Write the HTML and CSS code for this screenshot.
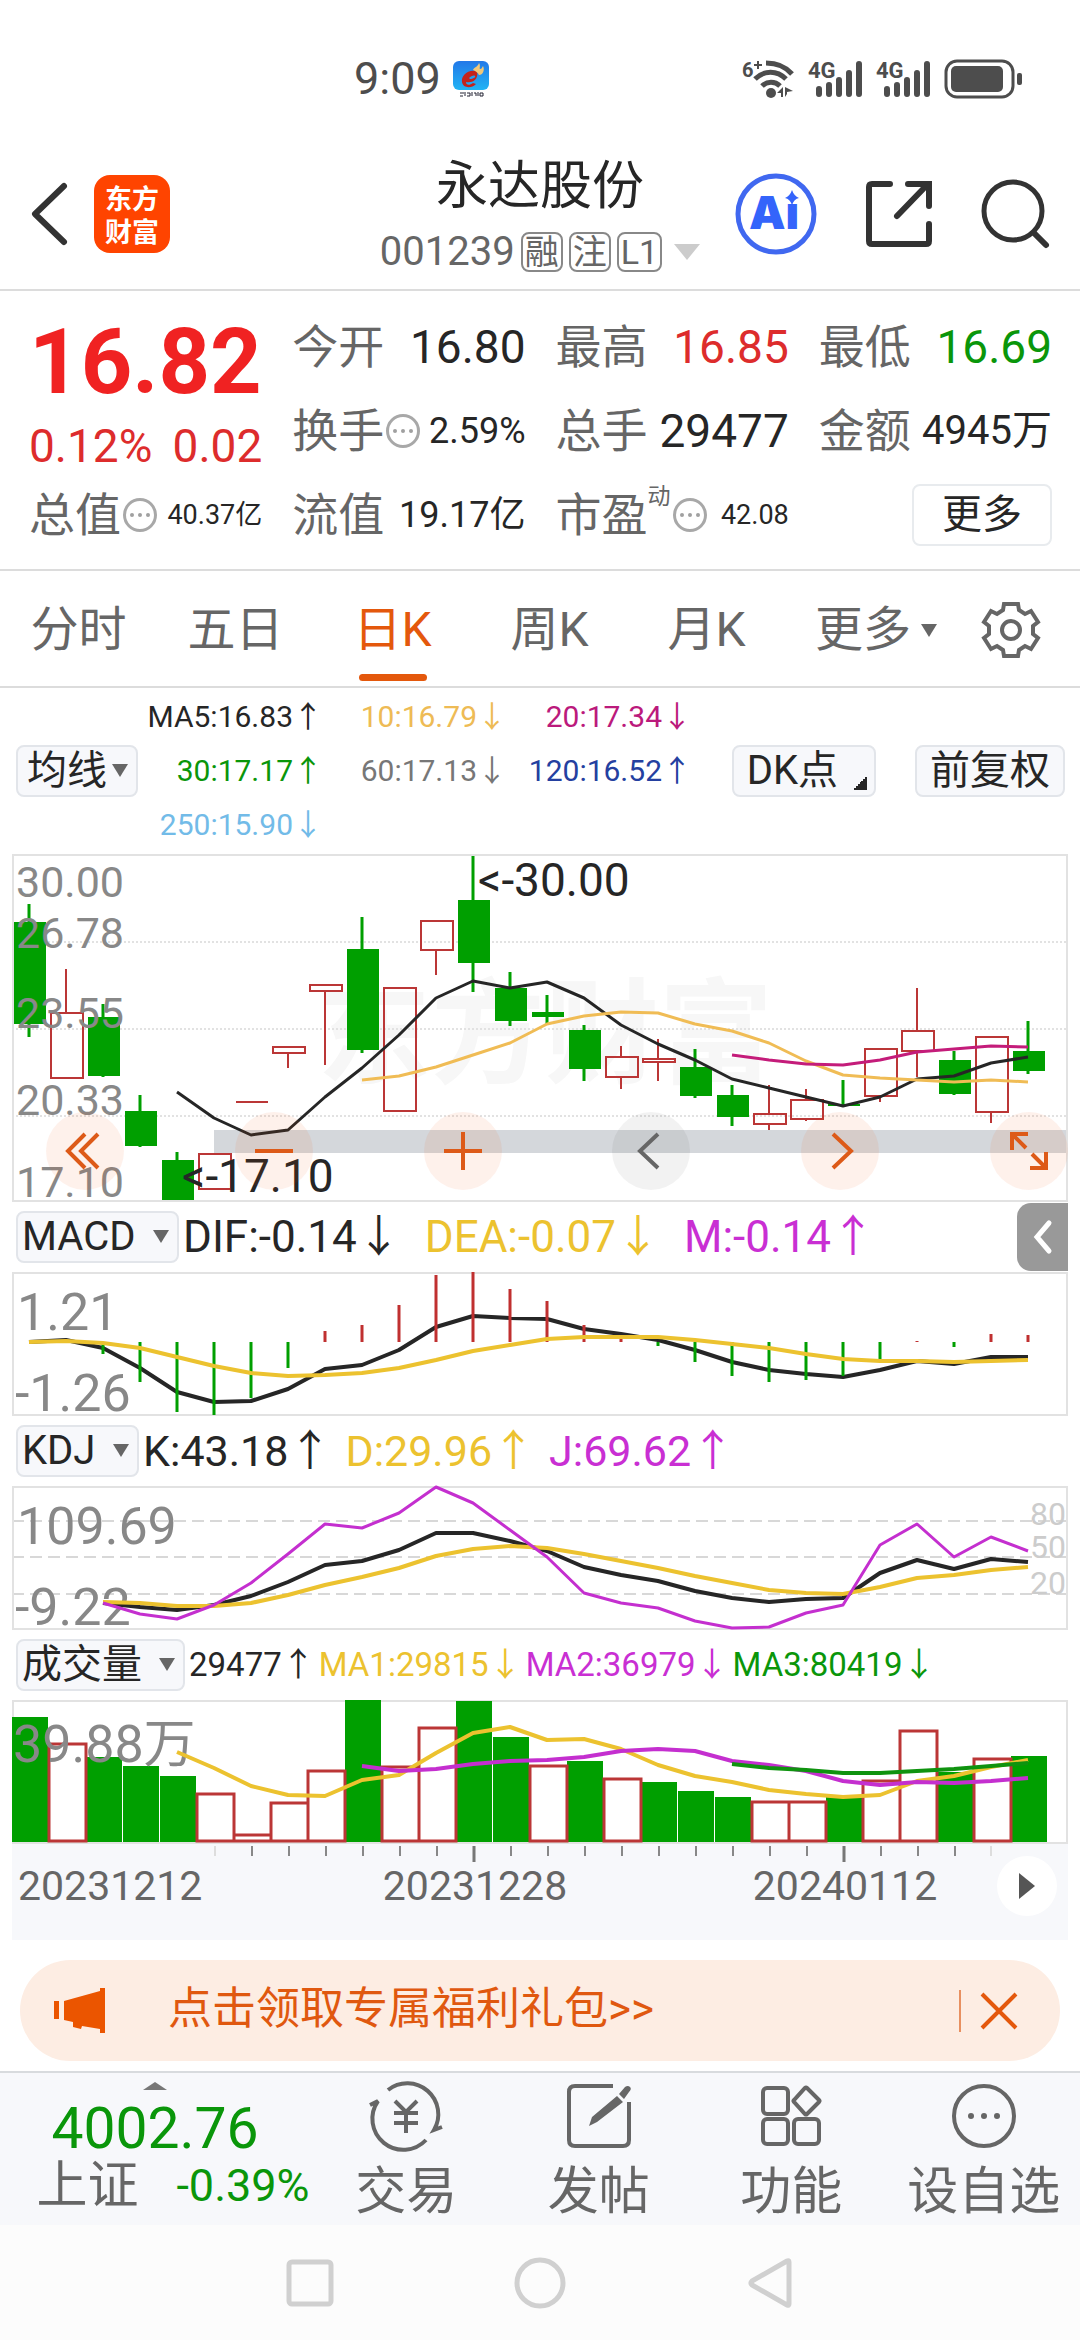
FILE: index.html
```html
<!DOCTYPE html>
<html lang="zh-CN">
<head>
<meta charset="utf-8">
<meta name="viewport" content="width=device-width, initial-scale=1">
<title>永达股份 001239</title>
<link rel="stylesheet" href="styles.css">
</head>
<body>
<div class="status">
  <div class="status-left">
    <span class="clock">9:09</span>
    <svg width="36" height="36" viewBox="0 0 36 36" aria-hidden="true">
      <defs><linearGradient id="sky" x1="0" y1="0" x2="0" y2="1"><stop offset="0" stop-color="#2278e8"/><stop offset="1" stop-color="#22b4f4"/></linearGradient></defs>
      <rect width="36" height="29" rx="6" fill="url(#sky)"/>
      <path d="M24 10C14 8 8 15 9 21c1 6 9 7 14 2l-3-1c-4 3-7 2-7-1 5 1 13-1 11-11z" fill="#c2231c"/>
      <path d="M16 17c2-2 5-3 6-2s-2 3-5 3z" fill="#22a0f0"/>
      <path d="M20 9c1-3 5-3 6-7 2 3 0 5 1 6 2 0 2-2 3-3 2 4 0 9-4 9-1-2-3-4-6-5z" fill="#f2c879"/>
      <path d="M7 32h4M7 35h3M12 31v4M14 32h3v3h-3M19 31v4M21 32h2v3M25 31v4M27 32h3v3h-3z" fill="none" stroke="#223" stroke-width="1"/>
    </svg>
  </div>
  <div class="status-right">
    <svg width="54" height="40" viewBox="0 0 54 40" aria-hidden="true">
      <text x="0" y="18" class="tiny">6</text>
      <path d="M12 6h8M16 2v8" stroke="#4d4d4d" stroke-width="2"/>
      <g fill="none" stroke="#4d4d4d" stroke-width="5"><path d="M24 4c11 0 20 4 26 11"/><path d="M13 20c9-9 22-9 31 0"/><path d="M20 27c5-5 13-5 18 0"/></g>
      <circle cx="29" cy="34" r="5" fill="#4d4d4d"/><path d="M35 34l6-6v10h-2v-4zM43 28v10l2-3v-2l6-1z" fill="#4d4d4d"/>
    </svg>
    <svg width="56" height="40" viewBox="0 0 56 40" aria-hidden="true">
      <text x="0" y="19" class="net">4G</text>
      <path d="M11 30v5M21 26v9M31 21v14M41 14v21M51 5v30" stroke="#4d4d4d" stroke-width="6" stroke-linecap="round"/>
    </svg>
    <svg width="56" height="40" viewBox="0 0 56 40" aria-hidden="true">
      <text x="0" y="19" class="net">4G</text>
      <path d="M11 30v5M21 26v9M31 21v14M41 14v21M51 5v30" stroke="#4d4d4d" stroke-width="6" stroke-linecap="round"/>
    </svg>
    <svg width="78" height="40" viewBox="0 0 78 40" aria-hidden="true">
      <rect x="2" y="2" width="67" height="36" rx="11" fill="none" stroke="#4d4d4d" stroke-width="3"/>
      <rect x="7" y="7" width="52" height="26" rx="5" fill="#4d4d4d"/>
      <rect x="73" y="14" width="5" height="12" rx="2" fill="#4d4d4d"/>
    </svg>
  </div>
</div>

<header class="header">
  <div class="head-left">
    <button class="icon" aria-label="返回"><svg width="36" height="62" viewBox="0 0 36 62"><path d="M33 3L4 31l29 28" fill="none" stroke="#333" stroke-width="6" stroke-linecap="round" stroke-linejoin="round"/></svg></button>
    <a class="logo" href="#home">东方<br>财富</a>
  </div>
  <div class="head-title">
    <h1>永达股份</h1>
    <div class="code"><span>001239</span><i class="mark">融</i><i class="mark">注</i><i class="mark">L1</i><i class="tri tri-head"></i></div>
  </div>
  <div class="head-right">
    <button class="icon" aria-label="AI"><svg width="82" height="82" viewBox="0 0 82 82"><circle cx="41" cy="41" r="38" fill="none" stroke="#4068f0" stroke-width="5"/><text x="14" y="56" class="ai">Ai</text><path d="M48 16h17v14H48z" fill="#fff"/><path d="M57 17q2 6 7 8-5 1-7 7-2-6-7-7 5-2 7-8z" fill="#3464fb"/></svg></button>
    <button class="icon" aria-label="分享"><svg width="66" height="66" viewBox="0 0 66 66"><path d="M24 3H6q-3 0-3 3v54q0 3 3 3h54q3 0 3-3V43M31 35L60 5M42 3h21v22" fill="none" stroke="#333" stroke-width="6" stroke-linecap="round"/></svg></button>
    <button class="icon" aria-label="搜索"><svg width="68" height="68" viewBox="0 0 68 68"><circle cx="32" cy="31" r="29" fill="none" stroke="#333" stroke-width="5"/><path d="M53 53l12 12" stroke="#333" stroke-width="6" stroke-linecap="round"/></svg></button>
  </div>
</header>

<section class="quote">
  <div class="price up">
    <strong>16.82</strong>
    <div class="change"><span>0.12%</span><span>0.02</span></div>
  </div>
  <div class="cell"><span class="name">今开</span><span class="v46">16.80</span></div>
  <div class="cell"><span class="name">最高</span><span class="v46 up">16.85</span></div>
  <div class="cell"><span class="name">最低</span><span class="v46 down">16.69</span></div>
  <div class="cell"><span class="name">换手<i class="info"></i></span><span class="v36">2.59%</span></div>
  <div class="cell"><span class="name">总手</span><span class="v46">29477</span></div>
  <div class="cell"><span class="name">金额</span><span class="v40">4945万</span></div>
  <div class="cell"><span class="name">总值<i class="info"></i></span><span class="v27">40.37亿</span></div>
  <div class="cell"><span class="name">流值</span><span class="v36">19.17亿</span></div>
  <div class="cell"><span class="name">市盈<sup>动</sup><i class="info"></i></span><span class="v27">42.08</span></div>
  <div class="cell cell-end"><button class="more">更多</button></div>
</section>

<nav class="tabs">
  <a href="#fs">分时</a><a href="#d5">五日</a><a href="#dk" class="active">日K</a><a href="#wk">周K</a><a href="#mk">月K</a>
  <a href="#more" class="tab-more">更多<i class="tri"></i></a>
  <button class="icon" aria-label="设置"><svg width="60" height="60" viewBox="-30 -30 60 60"><path d="M-7-26H7l1 6 6 4 6-3 7 11-5 4V4l5 4-7 11-6-3-6 4-1 6H-7l-1-6-6-4-6 3-7-11 5-4V-4l-5-4 7-11 6 3 6-4z" fill="none" stroke="#666" stroke-width="4"/><circle r="9" fill="none" stroke="#666" stroke-width="4"/></svg></button>
</nav>

<section class="averages">
  <label class="pick"><select aria-label="均线"><option>均线</option></select></label>
  <div class="ma-grid">
    <span class="ink">MA5:16.83↑</span><span class="amber">10:16.79↓</span><span class="pink">20:17.34↓</span>
    <span class="down">30:17.17↑</span><span class="grey">60:17.13↓</span><span class="navy">120:16.52↑</span>
    <span class="sky">250:15.90↓</span>
  </div>
  <button class="chip dk">DK点<i class="corner"></i></button>
  <button class="chip">前复权</button>
</section>

<main class="charts">
  <div class="kline">
    <svg class="chart" viewBox="0 0 1056 348" role="img" aria-label="日K线">
      <text x="305" y="220" class="water">东方财富</text>
      <path d="M0 88H1056M0 175H1056M0 262H1056" stroke="#e2e2e2" stroke-width="2" stroke-dasharray="2 2"/>
      <g class="g">
        <path class="wick" d="M17 50V183M91 150V223M128 241V293M165 298V348M350 63V199M461 1V138M498 118V172M535 141V170M572 171V227M683 195V244M720 231V272M831 226V252M942 197V241M1016 167V220"/>
        <path d="M2 68h32v102H2zM76 163h32v59H76zM113 257h32v35h-32zM150 306h32v40h-32zM335 95h32v101h-32zM446 46h32v63h-32zM483 134h32v33h-32zM520 158h32v5h-32zM557 176h32v39h-32zM668 213h32v29h-32zM705 241h32v22h-32zM816 250h32v2h-32zM927 206h32v34h-32zM1001 197h32v20h-32z"/>
      </g>
      <g class="r">
        <path d="M54 115V158M276 199V214M313 137V211M424 96V121M609 192V202M609 223V235M646 185V204M646 209V227M757 231V259M757 270V276M794 235V245M794 265V267M868 242V248M905 134V177M905 197V223M979 258V269"/>
        <path d="M39 159h32v65H39zM187 300h32v35h-32zM224 248h32M261 193h32v6h-32zM298 131h32v6h-32zM372 134h32v123h-32zM409 67h32v29h-32zM594 203h32v20h-32zM631 205h32v3h-32zM742 260h32v10h-32zM779 246h32v19h-32zM853 195h32v47h-32zM890 177h32v20h-32zM964 183h32v75h-32z"/>
      </g>
      <path d="M202 276H1056v23H202z" fill="#d4d7db"/>
      <path class="line thin" stroke="#262626" d="M165 238L202 264 239 281 276 276 313 243 350 214 387 181 424 144 461 127 498 134 535 128 572 144 609 171 646 190 683 206 720 225 757 234 794 243 831 252 868 243 905 225 942 222 979 209 1016 203"/>
      <path class="line thin" stroke="#f0bc55" d="M350 226L387 222 424 213 461 201 498 189 535 170 572 162 609 158 646 159 683 170 720 177 757 189 794 207 831 221 868 224 905 226 942 228 979 226 1016 228"/>
      <path class="line thin" stroke="#c41c7a" d="M720 201L757 206 794 210 831 211 868 206 905 198 942 195 979 192 1016 193"/>
      <path d="M0 1H1056M0 347H1056M1 0V348M1055 0V348" class="frame"/>
      <g class="scale"><text x="4" y="43">30.00</text><text x="4" y="94">26.78</text><text x="4" y="174">23.55</text><text x="4" y="261">20.33</text><text x="4" y="343">17.10</text></g>
      <g class="peak"><text x="466" y="42">&lt;-30.00</text><text x="170" y="338">&lt;-17.10</text></g>
    </svg>
    <div class="tools">
      <button aria-label="最早"><svg width="40" height="40" viewBox="0 0 40 40"><path d="M20 3L3 20l17 17M33 3L16 20l17 17"/></svg></button>
      <button aria-label="缩小"><svg width="40" height="40" viewBox="0 0 40 40"><path d="M1 20h38"/></svg></button>
      <button aria-label="放大"><svg width="40" height="40" viewBox="0 0 40 40"><path d="M1 20h38M20 1v38"/></svg></button>
      <button class="off" aria-label="左移"><svg width="40" height="40" viewBox="0 0 40 40"><path d="M27 3L9 20l18 17"/></svg></button>
      <button aria-label="右移"><svg width="40" height="40" viewBox="0 0 40 40"><path d="M13 3l18 17-18 17"/></svg></button>
      <button aria-label="全屏"><svg width="40" height="40" viewBox="0 0 40 40"><path d="M3 19V3h16M3 3l14 14M37 21v16H21M37 37L23 23"/></svg></button>
    </div>
  </div>

  <div class="bar">
    <label class="pick wide"><select aria-label="指标一"><option>MACD</option></select></label>
    <div class="values loose"><span class="ink">DIF:-0.14↓</span><span class="gold">DEA:-0.07↓</span><span class="violet">M:-0.14↑</span></div>
    <button class="drawer" aria-label="展开"><svg width="20" height="34" viewBox="0 0 20 34"><path d="M16 3L4 17l12 14" fill="none" stroke="#fff" stroke-width="5" stroke-linecap="round"/></svg></button>
  </div>
  <svg class="chart" viewBox="0 0 1056 144" role="img" aria-label="MACD">
    <path d="M0 1H1056M0 143H1056M1 0V144M1055 0V144" class="frame"/>
    <g class="scale big"><text x="5" y="58">1.21</text><text x="3" y="139">-1.26</text></g>
    <path class="line" stroke="#262626" d="M17 70L54 68 91 76 128 96 165 120 202 130 239 129 276 117 313 97 350 93 387 78 424 55 461 44 498 46 535 47 572 57 609 62 646 68 683 78 720 90 757 98 794 102 831 105 868 98 905 89 942 92 979 85 1016 85"/>
    <path class="hist" stroke="#c03030" d="M54 67V70M313 59V70M350 53V70M387 33V70M424 3V70M461 0V70M498 17V70M535 29V70M572 53V70M609 65V70M905 69V70M979 62V70M1016 63V70"/>
    <path class="hist" stroke="#009f00" d="M91 70V82M128 70V110M165 70V140M202 70V143M239 70V126M276 70V96M646 70V74M683 70V90M720 70V104M757 70V110M794 70V108M831 70V104M868 70V87M942 70V75"/>
    <path class="line" stroke="#ecc22f" d="M17 70L54 69 91 71 128 76 165 85 202 94 239 101 276 104 313 103 350 101 387 96 424 88 461 79 498 73 535 67 572 65 609 65 646 65 683 68 720 72 757 76 794 82 831 87 868 89 905 89 942 90 979 89 1016 88"/>
  </svg>

  <div class="bar">
    <label class="pick wide"><select aria-label="指标二"><option>KDJ</option></select></label>
    <div class="values"><span class="ink">K:43.18↑</span><span class="gold">D:29.96↑</span><span class="violet">J:69.62↑</span></div>
  </div>
  <svg class="chart" viewBox="0 0 1056 144" role="img" aria-label="KDJ">
    <path d="M0 35H1056M0 71H1056M0 108H1056" stroke="#d8d8d8" stroke-width="2" stroke-dasharray="12 6"/>
    <path d="M0 1H1056M0 143H1056M1 0V144M1055 0V144" class="frame"/>
    <g class="scale big"><text x="5" y="58">109.69</text><text x="3" y="139">-9.22</text></g>
    <g class="levels"><text x="1054" y="39">80</text><text x="1054" y="72">50</text><text x="1054" y="108">20</text></g>
    <path class="line" stroke="#262626" d="M91 117L128 121 165 124 202 119 239 110 276 96 313 79 350 75 387 64 424 47 461 47 498 55 535 65 572 81 609 89 646 95 683 105 720 112 757 116 794 113 831 112 868 87 905 74 942 83 979 73 1016 76"/>
    <path class="line" stroke="#ecc22f" d="M91 116L128 117 165 120 202 120 239 117 276 109 313 99 350 91 387 82 424 70 461 63 498 60 535 62 572 68 609 75 646 82 683 90 720 97 757 104 794 107 831 108 868 101 905 92 942 89 979 84 1016 81"/>
    <path class="line thin" stroke="#c42fcf" d="M91 117L128 128 165 133 202 119 239 97 276 68 313 38 350 42 387 27 424 1 461 17 498 44 535 71 572 107 609 117 646 122 683 135 720 142 757 141 794 127 831 119 868 59 905 38 942 71 979 51 1016 65"/>
  </svg>

  <div class="bar">
    <label class="pick wide"><select aria-label="指标三"><option>成交量</option></select></label>
    <div class="values narrow"><span class="ink">29477↑</span><span class="gold">MA1:29815↓</span><span class="violet">MA2:36979↓</span><span class="down">MA3:80419↓</span></div>
  </div>
  <svg class="chart" viewBox="0 0 1056 144" role="img" aria-label="成交量">
    <path d="M0 1H1056M0 143H1056M1 0V144M1055 0V144" class="frame"/>
    <path fill="#009f00" d="M0 17h36v125H0zM74 57h36v85H74zM111 66h36v76h-36zM148 76h36v66h-36zM333 0h36v142h-36zM444 1h36v141h-36zM481 37h36v105h-36zM555 61h36v81h-36zM629 82h36v60h-36zM666 91h36v51h-36zM703 97h36v45h-36zM814 96h36v46h-36zM925 72h36v70h-36zM999 56h36v86h-36z"/>
    <path class="vol" d="M37 44h37v97H37zM185 94h37v47h-37zM222 135h37v6h-37zM259 103h37v38h-37zM296 71h37v70h-37zM370 67h37v74h-37zM407 28h37v113h-37zM518 66h37v75h-37zM592 79h37v62h-37zM740 102h37v39h-37zM777 102h37v39h-37zM851 81h37v60h-37zM888 31h37v110h-37zM962 59h37v82h-37z"/>
    <g class="scale big"><text x="1" y="62">39.88万</text></g>
    <path class="line" stroke="#ecc22f" d="M165 52L202 68 239 86 276 95 313 96 350 80 387 75 424 53 461 33 498 27 535 40 572 39 609 49 646 65 683 76 720 82 757 90 794 94 831 97 868 95 905 81 942 76 979 67 1016 60"/>
    <path class="line" stroke="#c42fcf" d="M350 66L387 71 424 69 461 64 498 61 535 60 572 57 609 51 646 49 683 51 720 61 757 65 794 71 831 81 868 85 905 82 942 83 979 81 1016 78"/>
    <path class="line" stroke="#0f930f" d="M720 64L757 68 794 70 831 73 868 73 905 71 942 69 979 66 1016 63"/>
  </svg>

  <div class="axis">
    <svg class="chart" viewBox="0 0 1056 96" role="img" aria-label="日期">
      <path d="M203 2v10M979 2v10" stroke="#ddd" stroke-width="2"/>
      <path d="M240 2v10M277 2v10M314 2v10M351 2v10M388 2v10M425 2v10M499 2v10M536 2v10M573 2v10M610 2v10M647 2v10M684 2v10M721 2v10M758 2v10M795 2v10M869 2v10M906 2v10M943 2v10" stroke="#888" stroke-width="2"/>
      <path d="M462 2v16M832 2v16" stroke="#777" stroke-width="3"/>
      <g class="dates"><text x="6" y="56">20231212</text><text x="463" y="56" text-anchor="middle">20231228</text><text x="833" y="56" text-anchor="middle">20240112</text></g>
    </svg>
    <button class="play" aria-label="播放"><i></i></button>
  </div>
</main>

<aside class="banner">
  <svg width="52" height="46" viewBox="0 0 52 46" aria-hidden="true"><path d="M0 13h5v18H0zM10 13L46 3V0h5v45h-5v-4l-18-3-1 3-8-2v-5l-9-2z" fill="#eb5500"/></svg>
  <a href="#gift">点击领取专属福利礼包&gt;&gt;</a>
  <button aria-label="关闭"><svg width="36" height="36" viewBox="0 0 36 36"><path d="M1 1l34 34M35 1L1 35" stroke="#e4580c" stroke-width="4"/></svg></button>
</aside>

<nav class="dock">
  <a class="index" href="#sh">
    <i class="peak-mark"></i>
    <b>4002.76</b>
    <span class="index-row"><span>上证</span><em>-0.39%</em></span>
  </a>
  <a href="#trade"><svg width="76" height="68" viewBox="-38 -34 76 68"><path d="M-18-26A31 31 0 0 1 28 14l8-3M20 24A31 31 0 0 1-28-15l-8 4M-11-15L0-4l11-11M0-4V17M-12-3h24M-12 7h24"/></svg>交易</a>
  <a href="#post"><svg width="64" height="68" viewBox="-32 -34 64 68"><path d="M14-30H-24q-6 0-6 6V24q0 6 6 6H24q6 0 6-6V-14"/><path d="M18-20l6 6L-2 6l-8 4 3-9zM20-22l6-7q3-2 5 0t-1 5l-5 7z" fill="#666" stroke="none"/></svg>发帖</a>
  <a href="#tools"><svg width="64" height="68" viewBox="-32 -34 64 68"><rect x="-28" y="-28" width="25" height="26" rx="4"/><rect x="-28" y="3" width="25" height="25" rx="4"/><rect x="3" y="3" width="25" height="25" rx="4"/><path d="M14-28q1-1 2 0L28-16q1 1 0 2L16-2q-1 1-2 0L3-14q-1-1 0-2z"/></svg>功能</a>
  <a href="#fav"><svg width="64" height="68" viewBox="-32 -34 64 68"><circle r="30"/><g fill="#666" stroke="none"><circle cx="-13" r="3"/><circle r="3"/><circle cx="13" r="3"/></g></svg>设自选</a>
</nav>

<div class="system">
  <button class="icon" aria-label="最近"><svg width="48" height="52" viewBox="0 0 48 52"><rect x="3" y="5" width="42" height="42" rx="3"/></svg></button>
  <button class="icon" aria-label="主页"><svg width="52" height="52" viewBox="0 0 52 52"><circle cx="26" cy="26" r="23"/></svg></button>
  <button class="icon" aria-label="返回"><svg width="48" height="52" viewBox="0 0 48 52"><path d="M43 5v42q0 2-2 1L6 28q-2-2 0-4L41 4q2-1 2 1z"/></svg></button>
</div>
</body>
</html>
```
FILE: styles.css
```css
* { box-sizing: border-box; }

body {
  margin: 0;
  background: #fff;
  color: #262626;
  font-family: Roboto, "Noto Sans CJK SC", sans-serif;
}

button { margin: 0; padding: 0; border: 0; background: none; color: inherit; font: inherit; }
a { color: inherit; text-decoration: none; }
i, em { font-style: normal; }
svg { display: block; flex: none; overflow: visible; }

.up { color: #dd2c2c; }
.down { color: #0a960a; }
.ink { color: #262626; }
.amber { color: #eebb55; }
.pink { color: #bb1a7c; }
.grey { color: #777; }
.navy { color: #2440a0; }
.sky { color: #72bbe8; }
.gold { color: #ecc22f; }
.violet { color: #c92fd3; }

.tri {
  border: 8px solid transparent;
  border-top: 13px solid #666;
  border-bottom: 0;
}

/* status bar */
.status {
  display: flex;
  justify-content: space-between;
  align-items: center;
  height: 130px;
  padding: 28px 58px 0 354px;
}
.status-left, .status-right { display: flex; align-items: center; gap: 12px; }
.clock { font-size: 45px; line-height: 52px; color: #4d4d4d; }
.tiny { font: 700 20px Roboto, sans-serif; fill: #4d4d4d; }
.net { font: 700 22px Roboto, sans-serif; fill: #4d4d4d; }

/* header */
.header {
  display: grid;
  grid-template-columns: 1fr auto 1fr;
  align-items: center;
  padding: 23px 31px 15px 31px;
  border-bottom: 2px solid #dcdcdc;
}
.head-left { display: flex; align-items: center; gap: 27px; }
.head-right { display: flex; align-items: center; justify-content: flex-end; gap: 49px; }
.logo {
  width: 76px;
  padding: 6px 0;
  border-radius: 16px;
  background: #ff4400;
  color: #fff;
  text-align: center;
  font: 700 27px/33px "Noto Sans CJK SC", sans-serif;
}
.head-title { text-align: center; }
h1 { margin: 0; font-size: 52px; line-height: 68px; font-weight: 400; }
.code {
  display: flex;
  align-items: center;
  justify-content: center;
  gap: 6px;
  margin-top: 9px;
  color: #666;
  font-size: 40px;
  line-height: 44px;
}
.mark {
  padding: 0 2px;
  border: 2px solid #888;
  border-radius: 8px;
  font-size: 34px;
  line-height: 36px;
}
.tri-head { margin-left: 6px; border-width: 16px 13px 0; border-top-color: #ccc; }
.ai { font: 900 46px Inter, sans-serif; fill: #3464fb; }

/* quote */
.quote {
  display: grid;
  grid-template-columns: repeat(4, 1fr);
  grid-auto-rows: 84px;
  column-gap: 30px;
  padding: 14px 28px 12px 29px;
  border-bottom: 2px solid #dcdcdc;
}
.price { grid-row: span 2; padding-top: 7px; }
.price strong { display: block; color: #f02222; font-size: 90px; line-height: 102px; font-weight: 700; }
.change { display: flex; justify-content: space-between; font-size: 46px; line-height: 64px; }
.cell { display: flex; align-items: center; justify-content: space-between; white-space: nowrap; line-height: 60px; }
.cell-end { justify-content: flex-end; }
.name { display: flex; align-items: center; color: #666; font-size: 46px; }
.name sup { align-self: flex-start; font-size: 23px; line-height: 24px; }
.info {
  display: flex;
  align-items: center;
  justify-content: center;
  width: 34px;
  height: 34px;
  margin-left: 2px;
  border: 3px solid #a8a8a8;
  border-radius: 50%;
}
.info::before {
  content: "";
  width: 4px;
  height: 4px;
  border-radius: 50%;
  background: #a0a0a0;
  box-shadow: -8px 0 #a0a0a0, 8px 0 #a0a0a0;
}
.v46 { font-size: 46px; }
.v40 { font-size: 40px; }
.v36 { font-size: 36px; }
.v27 { font-size: 27px; }
.more { width: 140px; height: 62px; border: 2px solid #e8ebee; border-radius: 8px; font-size: 40px; line-height: 56px; }

/* period tabs */
.tabs {
  display: grid;
  grid-template-columns: repeat(6, 1fr) 138px;
  height: 117px;
  border-bottom: 2px solid #dcdcdc;
  color: #666;
  font-size: 48px;
  line-height: 118px;
  text-align: center;
}
.tabs .active { position: relative; color: #e4580c; }
.tabs .active::after {
  content: "";
  position: absolute;
  left: 50%;
  bottom: 8px;
  width: 68px;
  height: 7px;
  margin-left: -34px;
  border-radius: 4px;
  background: #e4580c;
}
.tab-more { display: flex; align-items: center; gap: 10px; padding-left: 30px; }
.tabs .icon { display: flex; align-items: center; justify-content: center; }

/* moving averages */
.averages { display: flex; align-items: center; padding: 2px 15px 2px 16px; }
.pick { position: relative; display: block; }
.pick::after {
  content: "";
  position: absolute;
  right: 10px;
  top: 19px;
  border: 8px solid transparent;
  border-top: 13px solid #666;
  border-bottom: 0;
  pointer-events: none;
}
.pick select, .chip {
  display: block;
  height: 52px;
  border: 2px solid #e2e5ea;
  border-radius: 8px;
  background: #f7f8fb;
  color: #262626;
  font: 40px/44px Roboto, "Noto Sans CJK SC", sans-serif;
  appearance: none;
}
.pick select { margin: 0; padding: 0 29px 0 9px; }
.pick.wide select { padding: 0 41px 0 4px; }
.ma-grid {
  flex: 1;
  display: grid;
  grid-template-columns: 185px 184px 185px;
  grid-auto-rows: 54px;
  justify-items: end;
  font-size: 30px;
  line-height: 54px;
}
.chip { padding: 0 13px; }
.dk { display: flex; align-items: center; gap: 15px; margin-right: 39px; padding-right: 7px; }
.corner { width: 14px; height: 14px; margin-top: 24px; background: linear-gradient(135deg, transparent 50%, #262626 50%); }

/* charts */
.charts { margin: 0 12px; }
.chart { width: 100%; height: auto; }
.kline { position: relative; }
.frame { fill: none; stroke: #e2e2e2; stroke-width: 2; }
.water { font: 700 114px "Noto Sans CJK SC", sans-serif; fill: #f7f7f7; }
.wick { fill: none; stroke: #009f00; stroke-width: 3; }
.g { fill: #009f00; }
.r { fill: none; stroke: #bb3636; stroke-width: 2; }
.line { fill: none; stroke-width: 4; stroke-linejoin: round; }
.line.thin { stroke-width: 3; }
.hist { stroke-width: 3; }
.vol { fill: #fff; stroke: #bb3636; stroke-width: 3; }
.scale { fill: #888; font-size: 43px; }
.scale.big { font-size: 52px; }
.peak { font-size: 46px; fill: #262626; }
.levels { font-size: 32px; fill: #ccc; text-anchor: end; }
.tools {
  position: absolute;
  left: 34px;
  right: 0;
  bottom: 12px;
  display: flex;
  justify-content: space-between;
}
.tools button {
  display: flex;
  align-items: center;
  justify-content: center;
  width: 78px;
  height: 78px;
  border-radius: 50%;
  background: rgba(240, 80, 0, .08);
}
.tools .off { background: rgba(0, 0, 0, .05); }
.tools path { fill: none; stroke: #dd5a18; stroke-width: 4; }
.tools .off path { stroke: #666; }

.bar { display: flex; align-items: center; height: 70px; padding-left: 4px; }
.values { display: flex; gap: 14px; padding-left: 4px; font-size: 43px; line-height: 60px; white-space: nowrap; }
.values.loose { gap: 24px; font-size: 44px; }
.values.narrow { gap: 4px; font-size: 33px; }
.drawer {
  display: flex;
  align-items: center;
  justify-content: center;
  width: 51px;
  height: 68px;
  margin-left: auto;
  border-radius: 14px 0 0 14px;
  background: #999;
}

.axis { position: relative; background: #f7f8fb; }
.dates { font-size: 41px; fill: #666; }
.play {
  position: absolute;
  right: 11px;
  top: 12px;
  display: flex;
  align-items: center;
  justify-content: center;
  width: 60px;
  height: 60px;
  border-radius: 50%;
  background: #fff;
}
.play i { border: 13px solid transparent; border-left: 16px solid #555; border-right: 0; }

/* promo */
.banner {
  display: flex;
  align-items: center;
  height: 101px;
  margin: 20px 20px 10px;
  padding: 0 43px 0 34px;
  border-radius: 51px;
  background: #fdede3;
  color: #e0580f;
  font-size: 44px;
  line-height: 60px;
}
.banner a { flex: 1; padding: 0 0 4px 62px; }
.banner button { padding: 3px 0 3px 20px; border-left: 2px solid #e89060; }

/* bottom dock */
.dock {
  display: grid;
  grid-template-columns: 310px repeat(4, 1fr);
  height: 154px;
  border-top: 2px solid #d8dbde;
  background: #f7f8fb;
  color: #666;
  font-size: 51px;
  line-height: 84px;
}
.dock a { display: flex; flex-direction: column; align-items: center; padding-top: 9px; white-space: nowrap; }
.dock svg { fill: none; stroke: #666; stroke-width: 4; }
.dock .index { color: #0a960a; }
.peak-mark { border: 12px solid transparent; border-bottom: 8px solid #777; border-top: 0; }
.index b { font-size: 57px; line-height: 78px; font-weight: 400; }
.index-row { display: flex; align-items: center; gap: 38px; padding-left: 36px; line-height: 36px; }
.index-row span { color: #666; }
.index-row em { font-size: 45px; }

.system { display: flex; align-items: center; justify-content: center; gap: 180px; height: 115px; background: #fcfcfc; }
.system svg { fill: none; stroke: #d0d0d0; stroke-width: 5; }
```
